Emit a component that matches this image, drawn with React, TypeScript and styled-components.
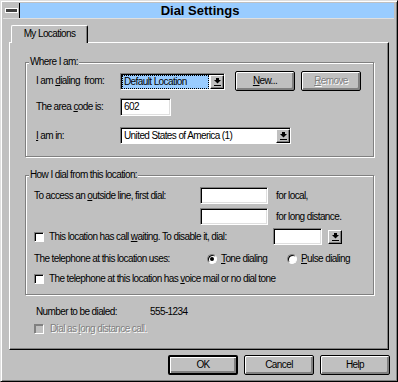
import React from "react";
import styled, { createGlobalStyle } from "styled-components";

const Global = createGlobalStyle`
  html, body { margin: 0; padding: 0; background: #c0c0c0; }
  body {
    font-family: "Liberation Sans", Arial, sans-serif;
    font-size: 10px;
    letter-spacing: -0.6px;
    color: #000;
  }
  * { box-sizing: border-box; }
`;

const Window = styled.div`
  width: 398px;
  height: 382px;
  background: #c0c0c0;
  border: 1px solid;
  border-color: #dfdfdf #000 #000 #dfdfdf;
  box-shadow: inset 1px 1px #fff, inset -1px -1px #808080;
  padding: 2px 3px 0 2px;
  display: flex;
  flex-direction: column;
`;

const TitleBar = styled.div`
  height: 16px;
  display: flex;
  border-bottom: 1px solid #dfdfdf;
`;

const SysMenu = styled.div`
  width: 17px;
  height: 15px;
  background: #c0c0c0;
  border-right: 1px solid #000;
  display: flex;
  align-items: center;
  justify-content: center;
`;

const SysDash = styled.div`
  width: 11px;
  height: 3px;
  background: #404040;
  box-shadow: 0 0 0 1px #fff;
`;

const Title = styled.div`
  flex: 1;
  height: 15px;
  background: #99ccff;
  font-family: "Liberation Sans", Arial, sans-serif;
  font-weight: bold;
  font-size: 13px;
  letter-spacing: 0;
  line-height: 15px;
  text-align: center;
  padding-right: 14px;
`;

const TabStrip = styled.div`
  display: flex;
  margin-top: 6px;
  padding-left: 8px;
`;

const Tab = styled.div`
  position: relative;
  z-index: 1;
  width: 77px;
  height: 18px;
  margin-bottom: -1px;
  background: #c0c0c0;
  border-top: 1px solid #fff;
  border-left: 1px solid #fff;
  border-right: 1px solid #000;
  border-top-left-radius: 2px;
  border-top-right-radius: 2px;
  box-shadow: inset -1px 0 #808080;
  text-align: center;
  line-height: 15px;
`;

const Panel = styled.div`
  width: 380px;
  height: 308px;
  margin-left: 6px;
  border-top: 1px solid #fff;
  border-left: 1px solid #fff;
  border-right: 1px solid #000;
  border-bottom: 1px solid #000;
  box-shadow: inset -1px -1px #808080;
  padding: 0 0 0 15px;
  display: flex;
  flex-direction: column;
`;

const Group = styled.div<{ $mt: number; $h: number; $pl: number }>`
  width: 349px;
  height: ${(p) => p.$h}px;
  margin-top: ${(p) => p.$mt}px;
  border: 1px solid #808080;
  box-shadow: 1px 1px 0 #fff, inset 1px 1px 0 #fff;
  padding-left: ${(p) => p.$pl}px;
  display: flex;
  flex-direction: column;
`;

const Legend = styled.div<{ $pl: number }>`
  align-self: flex-start;
  margin: -7px 0 0 -${(p) => p.$pl - 3}px;
  padding: 0 1px;
  height: 12px;
  line-height: 12px;
  background: #c0c0c0;
`;

const Row = styled.div<{ $mt: number; $h: number; $pl?: number }>`
  display: flex;
  align-items: center;
  height: ${(p) => p.$h}px;
  margin-top: ${(p) => p.$mt}px;
  padding-left: ${(p) => p.$pl ?? 0}px;
`;

const Label = styled.div<{ $w?: number }>`
  width: ${(p) => (p.$w ? `${p.$w}px` : "auto")};
  flex: none;
  white-space: nowrap;
  line-height: 12px;
`;

const Mn = styled.span`
  text-decoration: underline;
  text-underline-offset: 1px;
`;

const Sunken = styled.div<{ $w: number; $h: number }>`
  width: ${(p) => p.$w}px;
  height: ${(p) => p.$h}px;
  flex: none;
  background: #fff;
  border: 1px solid;
  border-color: #808080 #fff #fff #808080;
  box-shadow: inset 1px 1px #000, inset -1px -1px #dfdfdf;
  display: flex;
  align-items: center;
  padding: 0 2px 0 3px;
  white-space: nowrap;
  line-height: 12px;
`;

const ComboText = styled.div<{ $sel?: boolean }>`
  flex: 1;
  height: 100%;
  display: flex;
  align-items: center;
  padding-left: 2px;
  margin: 2px 1px 2px 0;
  background: ${(p) => (p.$sel ? "#99ccff" : "transparent")};
  outline: ${(p) => (p.$sel ? "1px dotted #000" : "none")};
  outline-offset: -1px;
`;

const ArrowBtn = styled.div`
  width: 14px;
  height: 14px;
  flex: none;
  background: #c0c0c0;
  border: 1px solid;
  border-color: #fff #000 #000 #fff;
  box-shadow: inset -1px -1px #808080;
  display: flex;
  align-items: center;
  justify-content: center;
`;

const ComboBox = styled.div<{ $w: number }>`
  width: ${(p) => p.$w}px;
  height: 17px;
  flex: none;
  display: flex;
  align-items: center;
  background: #fff;
  border: 1px solid;
  border-color: #808080 #fff #fff #808080;
  box-shadow: inset 1px 1px #000;
  padding: 1px 0 0 1px;
  white-space: nowrap;
  line-height: 12px;
`;

const Button = styled.button<{ $w: number; $default?: boolean; $ml?: number }>`
  width: ${(p) => p.$w}px;
  height: 20px;
  flex: none;
  margin-left: ${(p) => p.$ml ?? 0}px;
  padding: 0;
  font: inherit;
  letter-spacing: inherit;
  color: #000;
  background: #c0c0c0;
  border: ${(p) => (p.$default ? 2 : 1)}px solid #000;
  border-radius: 2px;
  box-shadow: inset 1px 1px #fff, inset -1px -1px #808080, inset -2px -2px #808080;
  line-height: 12px;
  &:disabled {
    color: #808080;
    text-shadow: 1px 1px #fff;
  }
`;

const Check = styled.span<{ $disabled?: boolean }>`
  width: 10px;
  height: 10px;
  flex: none;
  background: ${(p) => (p.$disabled ? "#c0c0c0" : "#fff")};
  border: 1px solid;
  border-color: #808080 #fff #fff #808080;
  box-shadow: inset 1px 1px ${(p) => (p.$disabled ? "#808080" : "#000")};
`;

const CheckItem = styled.div<{ $w?: number; $gap: number; $disabled?: boolean }>`
  display: flex;
  align-items: center;
  gap: ${(p) => p.$gap}px;
  width: ${(p) => (p.$w ? `${p.$w}px` : "auto")};
  flex: none;
  white-space: nowrap;
  line-height: 12px;
  color: ${(p) => (p.$disabled ? "#808080" : "#000")};
  text-shadow: ${(p) => (p.$disabled ? "1px 1px #fff" : "none")};
`;

const Radio = styled.span<{ $on?: boolean }>`
  width: 10px;
  height: 10px;
  flex: none;
  border-radius: 50%;
  background: #fff;
  border: 1px solid;
  border-color: #808080 #fff #fff #808080;
  box-shadow: inset 1px 1px #000;
  display: flex;
  align-items: center;
  justify-content: center;
  &::after {
    content: "";
    display: ${(p) => (p.$on ? "block" : "none")};
    width: 4px;
    height: 4px;
    border-radius: 50%;
    background: #000;
  }
`;

const Suffix = styled.div<{ $ml: number }>`
  margin-left: ${(p) => p.$ml}px;
  white-space: nowrap;
  line-height: 12px;
`;

const ButtonBar = styled.div`
  display: flex;
  justify-content: flex-end;
  gap: 6px;
  margin-top: 5px;
  padding-right: 4px;
`;

const DownArrow = () => (
  <svg width="7" height="8" viewBox="0 0 7 8">
    <rect x="2" y="0" width="3" height="2" fill="#000" />
    <polygon points="0,2 7,2 3.5,5.5" fill="#000" />
    <rect x="0" y="7" width="7" height="1" fill="#000" />
  </svg>
);

export default function App() {
  return (
    <>
      <Global />
      <Window>
        <TitleBar>
          <SysMenu>
            <SysDash />
          </SysMenu>
          <Title>Dial Settings</Title>
        </TitleBar>
        <TabStrip>
          <Tab>My Locations</Tab>
        </TabStrip>
        <Panel>
          <Group $mt={19} $h={95} $pl={10}>
            <Legend $pl={10}>Where I am:</Legend>
            <Row $mt={3} $h={20}>
              <Label $w={84}>
                I am <Mn>d</Mn>ialing&nbsp; from:
              </Label>
              <ComboBox $w={105}>
                <ComboText $sel>Default Location</ComboText>
                <ArrowBtn>
                  <DownArrow />
                </ArrowBtn>
              </ComboBox>
              <Button $w={60} $ml={10}>
                <Mn>N</Mn>ew...
              </Button>
              <Button $w={60} $ml={6} disabled>
                <Mn>R</Mn>emove
              </Button>
            </Row>
            <Row $mt={7} $h={17}>
              <Label $w={84}>
                The area <Mn>c</Mn>ode is:
              </Label>
              <Sunken $w={51} $h={18}>602</Sunken>
            </Row>
            <Row $mt={12} $h={17}>
              <Label $w={84}>
                <Mn>I</Mn> am in:
              </Label>
              <ComboBox $w={171}>
                <ComboText>United States of America (1)</ComboText>
                <ArrowBtn>
                  <DownArrow />
                </ArrowBtn>
              </ComboBox>
            </Row>
          </Group>

          <Group $mt={18} $h={120} $pl={8}>
            <Legend $pl={8}>How I dial from this location:</Legend>
            <Row $mt={6} $h={17}>
              <Label $w={166}>
                To access an <Mn>o</Mn>utside line, first dial:
              </Label>
              <Sunken $w={68} $h={17} />
              <Suffix $ml={8}>for local,</Suffix>
            </Row>
            <Row $mt={4} $h={17}>
              <Label $w={166} />
              <Sunken $w={68} $h={17} />
              <Suffix $ml={8}>for long distance.</Suffix>
            </Row>
            <Row $mt={3} $h={17}>
              <CheckItem $w={239} $gap={5}>
                <Check />
                <span>
                  This location has call <Mn>w</Mn>aiting. To disable it, dial:
                </span>
              </CheckItem>
              <Sunken $w={49} $h={17} />
              <Suffix $ml={6}>
                <ArrowBtn>
                  <DownArrow />
                </ArrowBtn>
              </Suffix>
            </Row>
            <Row $mt={7} $h={14}>
              <Label $w={173}>The telephone at this location uses:</Label>
              <CheckItem $w={80} $gap={4}>
                <Radio $on />
                <span>
                  <Mn>T</Mn>one dialing
                </span>
              </CheckItem>
              <CheckItem $gap={4}>
                <Radio />
                <span>
                  <Mn>P</Mn>ulse dialing
                </span>
              </CheckItem>
            </Row>
            <Row $mt={6} $h={14}>
              <CheckItem $gap={5}>
                <Check />
                <span>
                  The telephone at this location has <Mn>v</Mn>oice mail or no dial tone
                </span>
              </CheckItem>
            </Row>
          </Group>

          <Row $mt={10} $h={14} $pl={11}>
            <Label $w={114}>Number to be dialed:</Label>
            <Label>555-1234</Label>
          </Row>
          <Row $mt={3} $h={14} $pl={9}>
            <CheckItem $gap={6} $disabled>
              <Check $disabled />
              <span>
                Dial as <Mn>l</Mn>ong distance call.
              </span>
            </CheckItem>
          </Row>
        </Panel>
        <ButtonBar>
          <Button $w={70} $default>
            OK
          </Button>
          <Button $w={70}>Cancel</Button>
          <Button $w={70}>Help</Button>
        </ButtonBar>
      </Window>
    </>
  );
}
